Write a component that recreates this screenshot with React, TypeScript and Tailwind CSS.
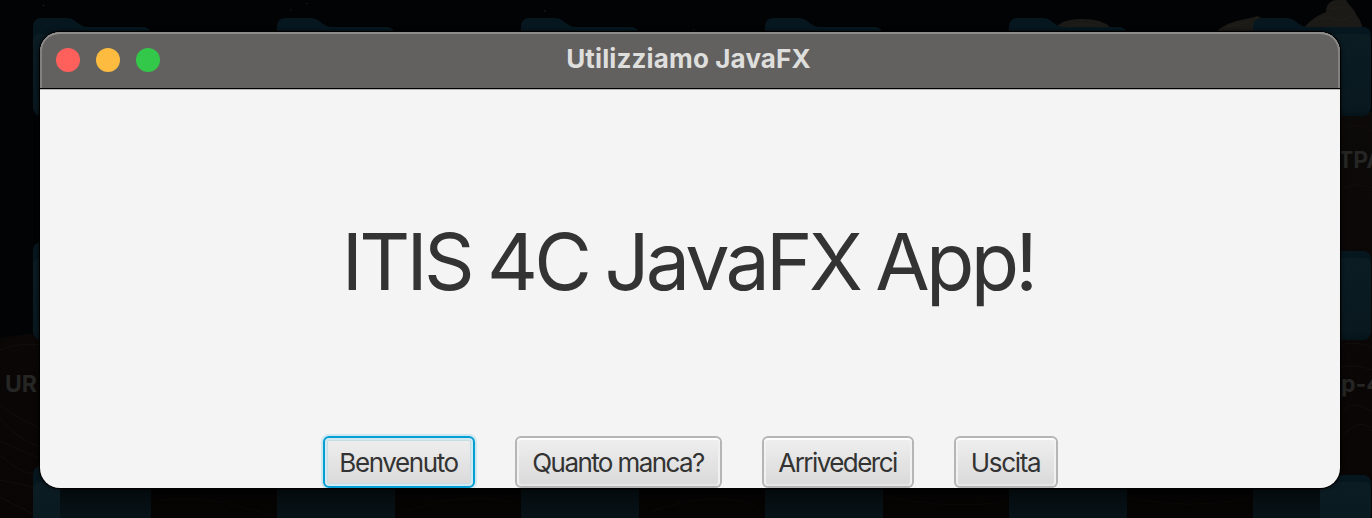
const folderColumns = [33, 277, 521, 765, 1009, 1253];
const folderRows = [17, 241, 465];

function Folder({ x, y }: { x: number; y: number }) {
  return (
    <g transform={`translate(${x} ${y})`}>
      <path d="M0 10Q0 1 9 1H34C39 1 42 4 46 7C49 9 51 10 55 10H109Q118 10 118 19V89Q118 99 108 99H10Q0 99 0 89Z" fill="url(#folderBack)" />
      <path d="M0 25Q0 17 8 17H110Q118 17 118 25V89Q118 99 108 99H10Q0 99 0 89Z" fill="url(#folderFront)" />
    </g>
  );
}

function Desktop() {
  return (
    <svg className="absolute inset-0" width="1372" height="518" viewBox="0 0 1372 518" aria-hidden="true">
      <defs>
        <linearGradient id="folderBack" x1="0" y1="0" x2="0" y2="1">
          <stop offset="0" stopColor="#07171f" />
          <stop offset="1" stopColor="#04141d" />
        </linearGradient>
        <linearGradient id="folderFront" x1="0" y1="0" x2="0" y2="1">
          <stop offset="0" stopColor="#0b1c23" />
          <stop offset="0.9" stopColor="#09181f" />
          <stop offset="1" stopColor="#05131a" />
        </linearGradient>
        <linearGradient id="ground" x1="0" y1="0" x2="0" y2="1">
          <stop offset="0" stopColor="#0c0a09" />
          <stop offset="1" stopColor="#080504" />
        </linearGradient>
        <linearGradient id="shade" x1="0" y1="0" x2="0" y2="1">
          <stop offset="0" stopColor="#000" stopOpacity="0.65" />
          <stop offset="1" stopColor="#000" stopOpacity="0.3" />
        </linearGradient>
      </defs>
      <rect width="1372" height="518" fill="#020304" />
      <path d="M0 338L30 334L60 338V490H1330V110L1372 112V518H0Z" fill="url(#ground)" />
      <g fill="none" stroke="#110e0c" strokeWidth="1">
        <path d="M0 350Q20 342 40 345M0 405Q20 420 40 428M0 418Q18 440 40 447M0 441L40 459M0 455Q18 472 33 474M0 480L33 487M0 497L33 514" />
        <path d="M1340 130Q1354 120 1372 131M1340 190Q1355 181 1372 188M1340 345Q1358 340 1372 348M1340 368Q1354 363 1372 370M1340 413Q1352 398 1372 412M1340 440Q1360 414 1372 431" />
        <path d="M160 500Q205 494 270 515M405 512Q460 491 510 502M650 512Q710 490 755 505M885 496Q945 510 1005 502M1130 498Q1190 510 1245 499" />
      </g>
      <g fill="#1c1a17">
        <path d="M1057 26Q1063 20 1078 19Q1101 18 1110 27V34H1057Z" />
        <path d="M1216 32C1228 20 1246 20 1257 16L1267 20V34H1216Z" />
        <path d="M1304 28C1310 20 1318 15 1326 12C1326 3 1332 0 1337 0H1346C1349 6 1354 8 1357 16Q1361 20 1363 30H1304Z" />
      </g>
      <path d="M1068 27Q1083 21 1100 27M1228 27L1249 22M1314 21L1328 17L1340 21L1352 16M1331 9L1345 7" fill="none" stroke="#211f1b" strokeWidth="1" />
      {folderRows.map((y) => folderColumns.map((x) => <Folder key={`${x}-${y}`} x={x} y={y} />))}
      <rect x="60" y="488" width="1260" height="30" fill="url(#shade)" />
      <g fill="#252524" fontFamily="Inter, sans-serif" fontWeight="700" fontSize="23">
        <text x="5" y="392">UR</text>
        <text x="1338" y="168">TPA</text>
        <text x="1341" y="392">p-4</text>
      </g>
      <g fill="#202224">
        <circle cx="43.5" cy="5.5" r="0.8" />
        <circle cx="307" cy="3.5" r="0.8" />
        <circle cx="291" cy="10" r="0.7" />
        <circle cx="545" cy="11" r="0.8" />
        <circle cx="694" cy="30" r="0.7" />
      </g>
    </svg>
  );
}

const buttons = [
  { label: "Benvenuto", size: "w-[152px]", text: "tracking-[-1.4px]", focused: true },
  { label: "Quanto manca?", size: "w-[207px]", text: "tracking-[-1.6px]", focused: false },
  { label: "Arrivederci", size: "w-[152px]", text: "tracking-[-1.55px]", focused: false },
  { label: "Uscita", size: "w-[104px]", text: "tracking-[-1.3px]", focused: false },
];

export default function App() {
  return (
    <div className="relative h-[518px] w-[1372px] overflow-hidden bg-black px-10 pt-8 font-['Inter',sans-serif]">
      <Desktop />
      <main className="relative flex h-[456px] w-[1300px] flex-col overflow-hidden rounded-[20px] bg-[#f4f4f4] shadow-[0_0_0_1px_#000,0_0_5px_#000]">
        <header className="grid h-[57px] shrink-0 grid-cols-[1fr_auto_1fr] items-start rounded-t-[20px] border-b border-black bg-[#63615f] px-4 shadow-[inset_0_2px_0_#8e8d8b,inset_2px_0_0_#82817f,inset_-2px_0_0_#82817f]">
          <div className="flex gap-4 pt-4">
            <span className="size-6 rounded-full bg-[#ff605c]" />
            <span className="size-6 rounded-full bg-[#fdbc40]" />
            <span className="size-6 rounded-full bg-[#34c84a]" />
          </div>
          <h1 className="-ml-[3px] pt-[10px] text-[26px] leading-[34px] font-bold tracking-[0.14px] whitespace-nowrap text-[#dededd]">Utilizziamo JavaFX</h1>
        </header>
        <div className="h-px shrink-0 bg-[#bab9b8]" />
        <section className="flex h-[346px] shrink-0 items-center justify-center pr-1 pb-[5px]">
          <p className="text-[79px] leading-[96px] tracking-[-3.75px] whitespace-nowrap text-[#333] [word-spacing:-2.3px]">ITIS 4C JavaFX App!</p>
        </section>
        <div className="flex justify-center gap-10">
          {buttons.map(({ label, size, text, focused }) => (
            <button
              key={label}
              className={`flex h-[52px] items-center justify-center rounded-[6px] border-2 bg-linear-to-b from-[#efefef] to-[#d9d9d9] text-[26px] whitespace-nowrap text-[#333] ${size} ${text} ${
                focused
                  ? "border-[#039ed3] shadow-[0_0_0_2px_#cfe7ef,inset_0_0_0_2px_#d2e9f1,inset_0_0_0_3px_#c5dce3]"
                  : "border-[#b5b5b5] shadow-[inset_0_2px_0_#fdfdfd,inset_2px_0_0_#f1f1f1,inset_-2px_0_0_#f1f1f1,inset_0_-2px_0_#e4e4e4]"
              }`}
            >
              {label}
            </button>
          ))}
        </div>
      </main>
    </div>
  );
}
